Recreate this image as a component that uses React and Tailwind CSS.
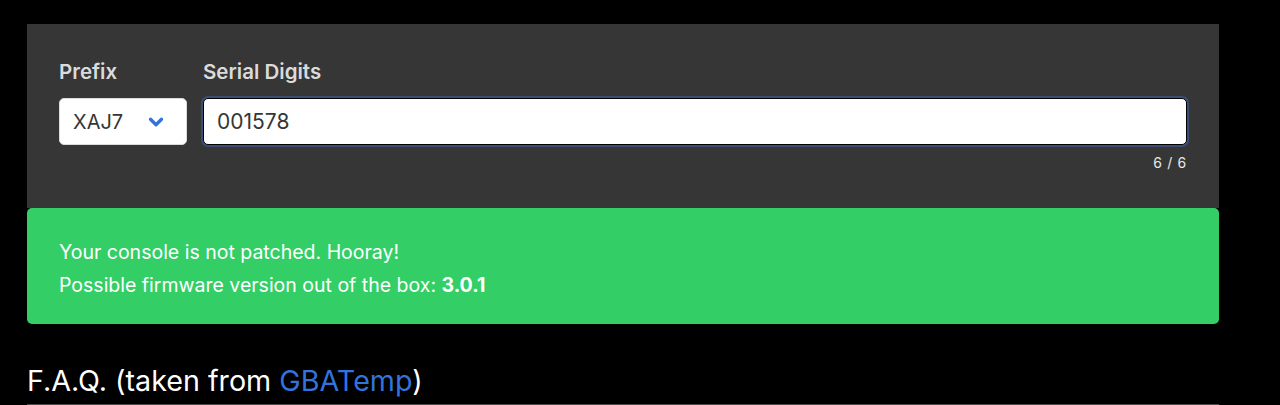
import { ChevronDown } from 'lucide-react';

export default function App() {
  return (
    <div className="min-h-screen w-full bg-black pt-6 font-['Inter',sans-serif]" style={{ height: 405, overflow: 'hidden' }}>
      <div className="ml-[27px] w-[1192px]">
        <div className="bg-[#363636] px-8 pt-[33px] pb-[35px]">
          <div className="flex gap-4">
            <div className="w-[128px]">
              <label className="block text-[20.5px] font-semibold text-[#dbdbdb] leading-[30px] mb-[11px]">Prefix</label>
              <div className="flex h-[47px] items-center justify-between rounded-[5px] border border-[#dbdbdb] bg-white pl-[13px] pr-[19px]">
                <span className="text-[20px] text-[#363636]">XAJ7</span>
                <ChevronDown size={22} strokeWidth={3.6} className="text-[#3273dc]" />
              </div>
            </div>
            <div className="flex-1">
              <label className="block text-[20.5px] font-semibold text-[#dbdbdb] leading-[30px] mb-[11px]">Serial Digits</label>
              <div className="flex h-[47px] items-center rounded-[5px] border border-black bg-white px-[13px] ring-2 ring-[#3a4e74]">
                <span className="text-[21px] text-[#363636]">001578</span>
              </div>
              <div className="mt-[7px] text-right text-[14px] tracking-wider text-[#e8e8e8]">6 / 6</div>
            </div>
          </div>
        </div>
        <div className="rounded-[5px] bg-[#33cf66] px-8 pt-[28px] pb-[22px] text-[19.5px] leading-[33px] text-white">
          <p>Your console is not patched. Hooray!</p>
          <p>Possible firmware version out of the box: <strong className="font-bold">3.0.1</strong></p>
        </div>
        <h2 className="mt-[40px] border-b border-[#4a4a4a] pb-[6px] text-[28.7px] leading-[34px] text-white">
          F.A.Q. (taken from <a className="text-[#3273dc]">GBATemp</a>)
        </h2>
      </div>
    </div>
  );
}
